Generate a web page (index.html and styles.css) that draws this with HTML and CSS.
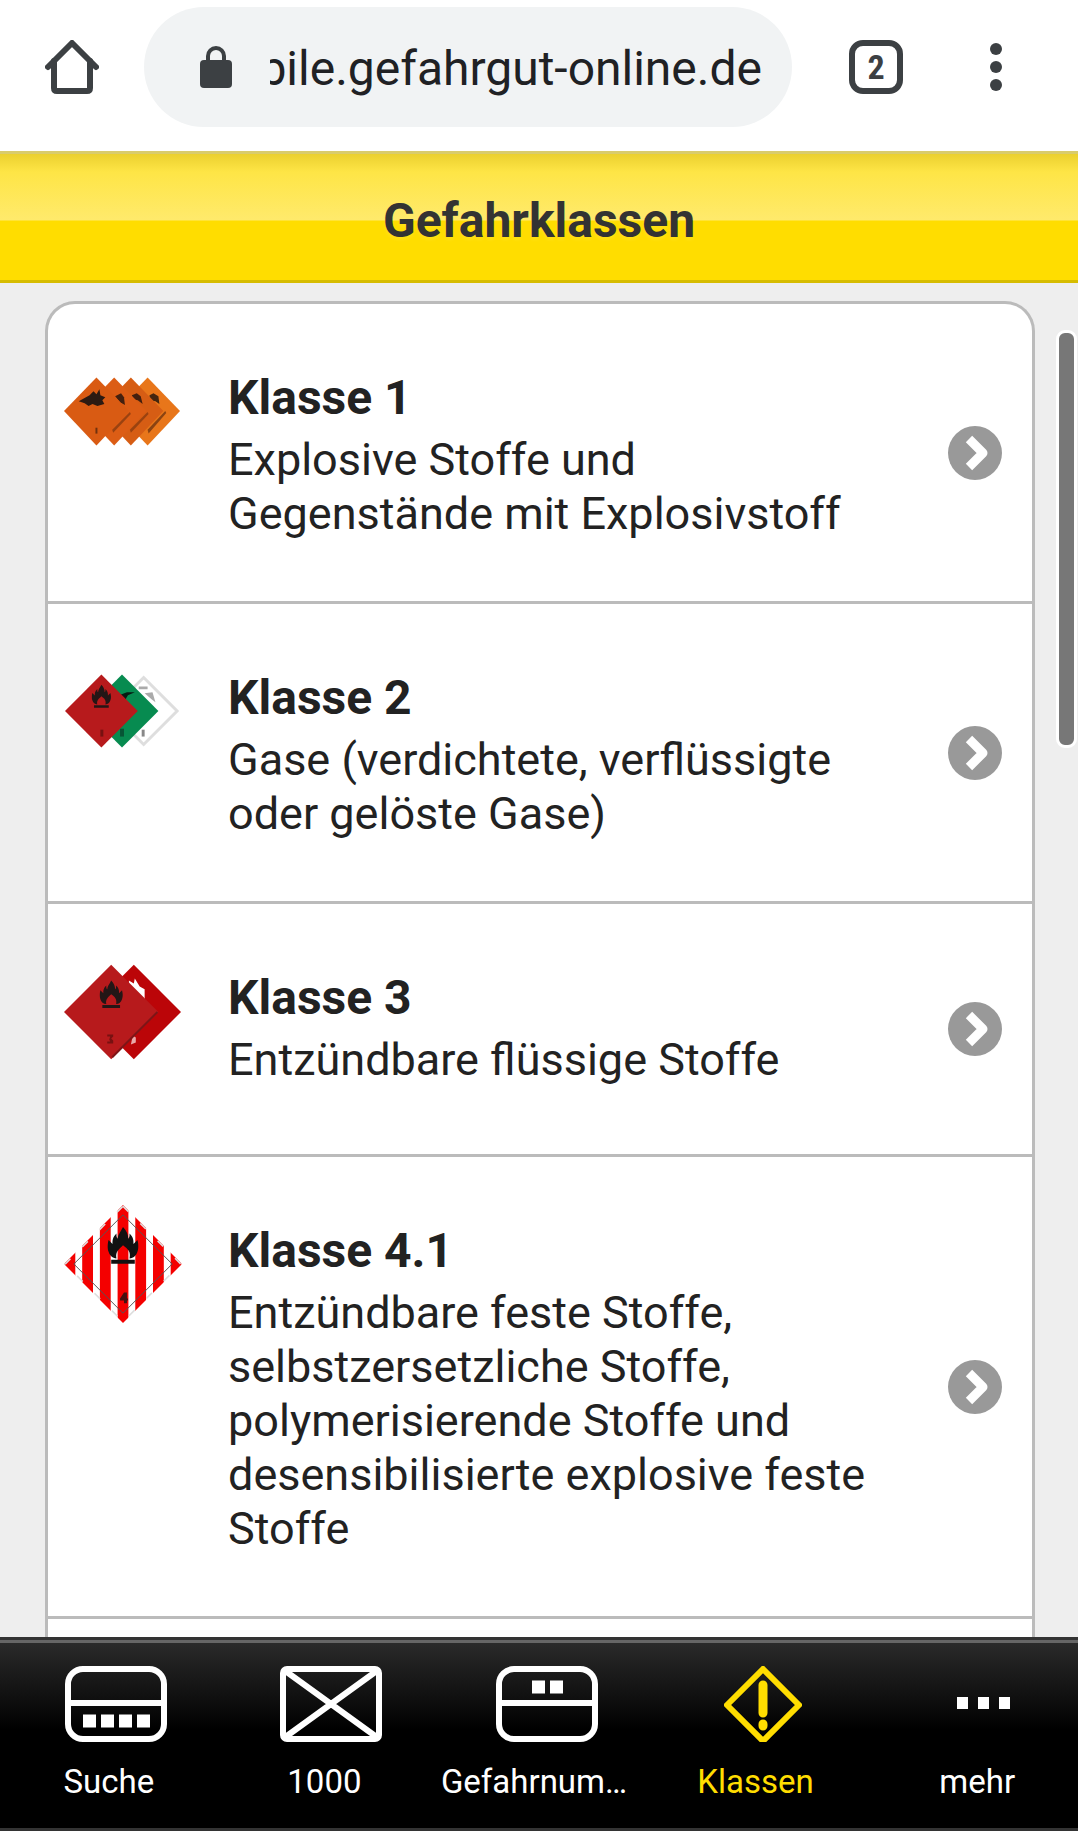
FILE: index.html
```html
<!DOCTYPE html>
<html lang="de">
<head>
    <meta charset="UTF-8">
    <meta name="viewport" content="width=device-width, initial-scale=1.0">
    <title>Gefahrklassen</title>
    <link rel="stylesheet" href="styles.css">
</head>
<body>
    <svg class="defs" width="0" height="0" aria-hidden="true">
        <symbol id="flame" viewBox="0 0 24 28">
            <path fill-rule="evenodd" d="M12 0c3 3 4 6 4 9 1-1 1-2 1-4 3 3 3 5 3 8l3-3c1 4 1 6 0 9-1 3-3 5-6 5 1-5-1-7-5-10-3 3-6 5-5 10-3 0-5-2-6-5-1-3-1-5 0-9l3 3c0-3 0-5 3-8 0 2 0 3 1 4C8 6 10 4 12 0z"/>
            <path d="M3 25h18v3H3z"/>
        </symbol>
        <symbol id="next" viewBox="0 0 54 54">
            <circle cx="27" cy="27" r="27" fill="#999"/>
            <path d="M21 13 L35 27 L21 41" fill="none" stroke="#fff" stroke-width="9" stroke-linejoin="round"/>
        </symbol>
    </svg>

    <div class="browser-bar">
        <button class="bar-btn" aria-label="Startseite">
            <svg width="54" height="54" viewBox="0 0 54 54" fill="none" stroke="#3c4043" stroke-width="6" stroke-linejoin="round" stroke-linecap="round">
                <path d="M3 27 L27 3 L51 27"/>
                <path d="M9 21 V48 Q9 51 12 51 H42 Q45 51 45 48 V21"/>
            </svg>
        </button>
        <div class="address">
            <svg width="32" height="42" viewBox="0 0 32 42">
                <path d="M8 16 V10 a8 8 0 0 1 16 0 V16" fill="none" stroke="#3c4043" stroke-width="4"/>
                <rect y="14" width="32" height="28" rx="4" fill="#3c4043"/>
            </svg>
            <input type="text" class="url" dir="rtl" aria-label="Adresse" value="mobile.gefahrgut-online.de">
        </div>
        <button class="bar-btn tabs">2</button>
        <button class="bar-btn" aria-label="Menü">
            <svg width="12" height="48" viewBox="0 0 12 48" fill="#3c4043">
                <circle cx="6" cy="6" r="6"/>
                <circle cx="6" cy="24" r="6"/>
                <circle cx="6" cy="42" r="6"/>
            </svg>
        </button>
    </div>

    <header class="title-bar">
        <h1>Gefahrklassen</h1>
    </header>

    <main class="content">
        <ul class="class-list">
            <li>
                <a href="#klasse1">
                    <svg class="thumb" viewBox="0 0 120 120">
                        <path d="M85 26 L118 60 L85 95 L52 60z" fill="#e8761a"/>
                        <path d="M87 44l4-2 5 3 1 8-4-3-6-1z" fill="#43260f"/>
                        <path d="M86 83l18-21-1-2-18 19z" fill="#8a4312"/>
                        <path d="M68 26 L101 60 L68 95 L35 60z" fill="#d65d14"/>
                        <path d="M69 44l5-2 4 3 2 8-5-4-5-1z" fill="#43200f"/>
                        <path d="M68 82l18-19-1-2-18 18z" fill="#9a4210"/>
                        <path d="M51 26 L84 60 L51 95 L18 60z" fill="#dc5d15"/>
                        <path d="M52 45l6-3 3 4 1 8-5-3z" fill="#43200f"/>
                        <path d="M50 82l18-19-1-2-18 18z" fill="#9a4210"/>
                        <path d="M33 26 L66 60 L33 95 L0 60z" fill="#d95b13"/>
                        <path d="M15 50l11-6 4-4 3 3 3-5 1 6 5 2-3 3 2 4-7 2-5-2-4 2-4-3z" fill="#2c1a12"/>
                        <path d="M32 77h2v6h-2z" fill="#70310f"/>
                    </svg>
                    <div class="text">
                        <h2>Klasse 1</h2>
                        <p>Explosive Stoffe und Gegenstände mit Explosivstoff</p>
                    </div>
                    <svg class="next"><use href="#next"/></svg>
                </a>
            </li>
            <li>
                <a href="#klasse2">
                    <svg class="thumb" viewBox="0 0 120 120">
                        <path d="M81 26 L115 60 L81 94 L47 60z" fill="#fff" stroke="#dedede" stroke-width="3"/>
                        <path d="M76 35h9v3h-9zM82 42l8-1 3 10-4-3z" fill="#aaa"/>
                        <path d="M79 79h3v7h-3z" fill="#888"/>
                        <path d="M59 23 L96 60 L59 97 L22 60z" fill="#078b50"/>
                        <path d="M56 44l8-3h8l-7 3-3 5z" fill="#071b13"/>
                        <path d="M57 78h4v8h-4z" fill="#075535"/>
                        <path d="M38 23 L75 60 L38 97 L1 60z" fill="#b71a1c"/>
                        <use href="#flame" x="28" y="33" width="20" height="24" fill="#241616"/>
                        <path d="M37 79h3v7h-3z" fill="#711"/>
                    </svg>
                    <div class="text">
                        <h2>Klasse 2</h2>
                        <p>Gase (verdichtete, verflüssigte oder gelöste Gase)</p>
                    </div>
                    <svg class="next"><use href="#next"/></svg>
                </a>
            </li>
            <li>
                <a href="#klasse3">
                    <svg class="thumb" viewBox="0 0 120 120">
                        <path d="M71 13 L119 61 L71 109 L23 61z" fill="#bb0508"/>
                        <path d="M66 29l5 3 1-5 5 8 5 3v12l-8-7-8-7z" fill="#fff"/>
                        <path d="M70 85l3 2v5l-5 2z" fill="#e9aaaa"/>
                        <path d="M48 13 L96 61 L48 109 L0 61z" fill="#b71a1c"/>
                        <path d="M49 107 L95 61" stroke="#7d1517" stroke-width="2"/>
                        <use href="#flame" x="36" y="28" width="24" height="30" fill="#241616"/>
                        <path d="M44 84h6v2l-2 2 2 2v3h-6v-2h3l-1-2 1-3h-3z" fill="#711"/>
                    </svg>
                    <div class="text">
                        <h2>Klasse 3</h2>
                        <p>Entzündbare flüssige Stoffe</p>
                    </div>
                    <svg class="next"><use href="#next"/></svg>
                </a>
            </li>
            <li>
                <a href="#klasse41">
                    <svg class="thumb" viewBox="0 0 120 120">
                        <clipPath id="rhombus"><path d="M60 0 L120 60 L60 120 L0 60z"/></clipPath>
                        <g clip-path="url(#rhombus)">
                            <path d="M60 0 L120 60 L60 120 L0 60z" fill="#fff"/>
                            <path d="M6 0V120M24 0V120M42 0V120M60 0V120M78 0V120M96 0V120M114 0V120" stroke="#f40000" stroke-width="11"/>
                            <path d="M60 1 L119 60 L60 119 L1 60z" fill="none" stroke="#ddd" stroke-width="2" stroke-dasharray="8 17"/>
                            <path d="M60 10 L110 60 L60 110 L10 60z" fill="none" stroke="#555" stroke-width="1"/>
                        </g>
                        <use href="#flame" x="44" y="22" width="32" height="38" fill="#111"/>
                        <path d="M61 89h3v6h1v2h-1v3h-3v-3h-4v-2z" fill="#411"/>
                    </svg>
                    <div class="text">
                        <h2>Klasse 4.1</h2>
                        <p>Entzündbare feste Stoffe, selbstzersetzliche Stoffe, polymerisierende Stoffe und desensibilisierte explosive feste Stoffe</p>
                    </div>
                    <svg class="next"><use href="#next"/></svg>
                </a>
            </li>
        </ul>
        <div class="scroll-thumb"></div>
    </main>

    <nav class="tab-bar">
        <a href="#suche">
            <svg width="102" height="76" viewBox="0 0 102 76" fill="none" stroke="#fff" stroke-width="6">
                <rect x="3" y="3" width="96" height="70" rx="15"/>
                <path d="M3 37H99"/>
                <path d="M18 55H85" stroke-width="13" stroke-dasharray="13 5"/>
            </svg>
            <span>Suche</span>
        </a>
        <a href="#1000">
            <svg width="102" height="76" viewBox="0 0 102 76" fill="none" stroke="#fff" stroke-width="6">
                <rect x="3" y="3" width="96" height="70" rx="4"/>
                <path d="M4 4 L98 72M98 4 L4 72"/>
            </svg>
            <span>1000</span>
        </a>
        <a href="#gefahrnummer">
            <svg width="102" height="76" viewBox="0 0 102 76" fill="none" stroke="#fff" stroke-width="6">
                <rect x="3" y="3" width="96" height="70" rx="15"/>
                <path d="M3 37H99"/>
                <path d="M36 21H67" stroke-width="13" stroke-dasharray="13 5"/>
            </svg>
            <span class="cut">Gefahrnum…</span>
        </a>
        <a href="#klassen" class="active">
            <svg width="78" height="76" viewBox="0 0 78 76" fill="none" stroke="#fd0" stroke-width="6" stroke-linejoin="round">
                <path d="M39 3 L75 39 L39 75 L3 39z"/>
                <path d="M39 19V47M39 58V60" stroke-width="9" stroke-linecap="round"/>
            </svg>
            <span>Klassen</span>
        </a>
        <a href="#mehr">
            <svg width="54" height="76" viewBox="0 0 54 76" fill="#fff">
                <path d="M0 31h11v12H0zM21 31h11v12H21zM42 31h11v12H42z"/>
            </svg>
            <span>mehr</span>
        </a>
    </nav>
</body>
</html>
```
FILE: styles.css
```css
:root{
    --main-color: #fd0;
    --line-color: #bbb;
    --icon-color: #3c4043;
}
*{
    box-sizing: border-box;
}
html, body{
    margin: 0;
    padding: 0;
}
body{
    display: flex;
    flex-direction: column;
    height: 100vh;
    overflow: hidden;
    background: #eee;
    color: #222;
    font-family: Roboto, "Liberation Sans", sans-serif;
}
h1, h2, p, ul{
    margin: 0;
    padding: 0;
}
ul{
    list-style: none;
}
a{
    color: inherit;
    text-decoration: none;
}
.defs{
    position: absolute;
}

/* browser bar */
.browser-bar{
    display: flex;
    flex: none;
    align-items: center;
    padding: 7px 76px 24px 45px;
    background: #fff;
}
.bar-btn{
    display: flex;
    flex: none;
    align-items: center;
    justify-content: center;
    padding: 0;
    border: 0;
    background: none;
    color: var(--icon-color);
}
.address{
    display: flex;
    flex: 1;
    align-items: center;
    gap: 38px;
    min-width: 0;
    height: 120px;
    margin: 0 57px 0 45px;
    padding: 0 30px 0 56px;
    border-radius: 60px;
    background: #f1f3f4;
}
.address svg{
    flex: none;
}
.url{
    flex: 1;
    min-width: 0;
    padding: 2px 0 0;
    border: 0;
    background: none;
    color: #202124;
    font-family: inherit;
    font-size: 48px;
    outline: 0;
}
.tabs{
    width: 54px;
    height: 54px;
    margin-right: 87px;
    border: 6px solid var(--icon-color);
    border-radius: 14px;
    font: bold 34px "Roboto Condensed", Roboto, sans-serif;
}

/* page title */
.title-bar{
    flex: none;
    padding: 38px 0 31px;
    border-top: 3px solid #d9cc6c;
    border-bottom: 3px solid #d6bc00;
    background: linear-gradient(#ebd02f 0, #fee546 18px, #ffea6c 66px, var(--main-color) 67px);
    text-align: center;
}
h1{
    color: #333;
    font-size: 48px;
    line-height: 57px;
    text-shadow: 0 3px 3px rgba(255, 238, 100, .2);
}

/* class list */
.content{
    position: relative;
    display: flex;
    flex: 1;
    flex-direction: column;
    min-height: 0;
    padding: 18px 43px 0 45px;
    overflow: hidden;
}
.class-list{
    flex: 1;
    border: 3px solid var(--line-color);
    border-bottom: 0;
    border-radius: 30px 30px 0 0;
    background: #fff;
}
.class-list li{
    border-bottom: 3px solid var(--line-color);
}
.class-list a{
    display: flex;
    align-items: center;
    min-height: 250px;
    padding: 0 30px 0 16px;
}
.thumb{
    flex: none;
    align-self: flex-start;
    width: 118px;
    height: 118px;
    margin: 48px 46px 0 0;
}
.text{
    flex: 1;
    align-self: flex-start;
    padding: 67px 64px 60px 0;
}
h2{
    margin-bottom: 8px;
    font-size: 48px;
    line-height: 54px;
}
p{
    font-size: 45px;
    line-height: 54px;
}
.next{
    flex: none;
    width: 54px;
    height: 54px;
}
.scroll-thumb{
    position: absolute;
    top: 47px;
    right: 1px;
    width: 21px;
    height: 418px;
    border: 3px solid #fff;
    border-radius: 9px;
    background: #777;
}

/* tab bar */
.tab-bar{
    display: grid;
    grid-template-columns: repeat(5, minmax(0, 1fr));
    flex: none;
    padding: 26px 0;
    border-top: 3px solid #333;
    border-bottom: 3px solid #333;
    background: linear-gradient(#666 3px, #2a2a2a 3px, #000 90px);
}
.tab-bar a{
    display: flex;
    flex-direction: column;
    align-items: center;
    gap: 20px;
    padding-left: 2px;
    color: #fff;
    font-size: 33px;
    line-height: 40px;
}
.tab-bar a:last-child{
    padding-left: 14px;
}
.tab-bar svg{
    margin-left: 14px;
}
.tab-bar span{
    white-space: nowrap;
}
.tab-bar .cut{
    padding-right: 12px;
}
.tab-bar .active{
    color: var(--main-color);
}
```
